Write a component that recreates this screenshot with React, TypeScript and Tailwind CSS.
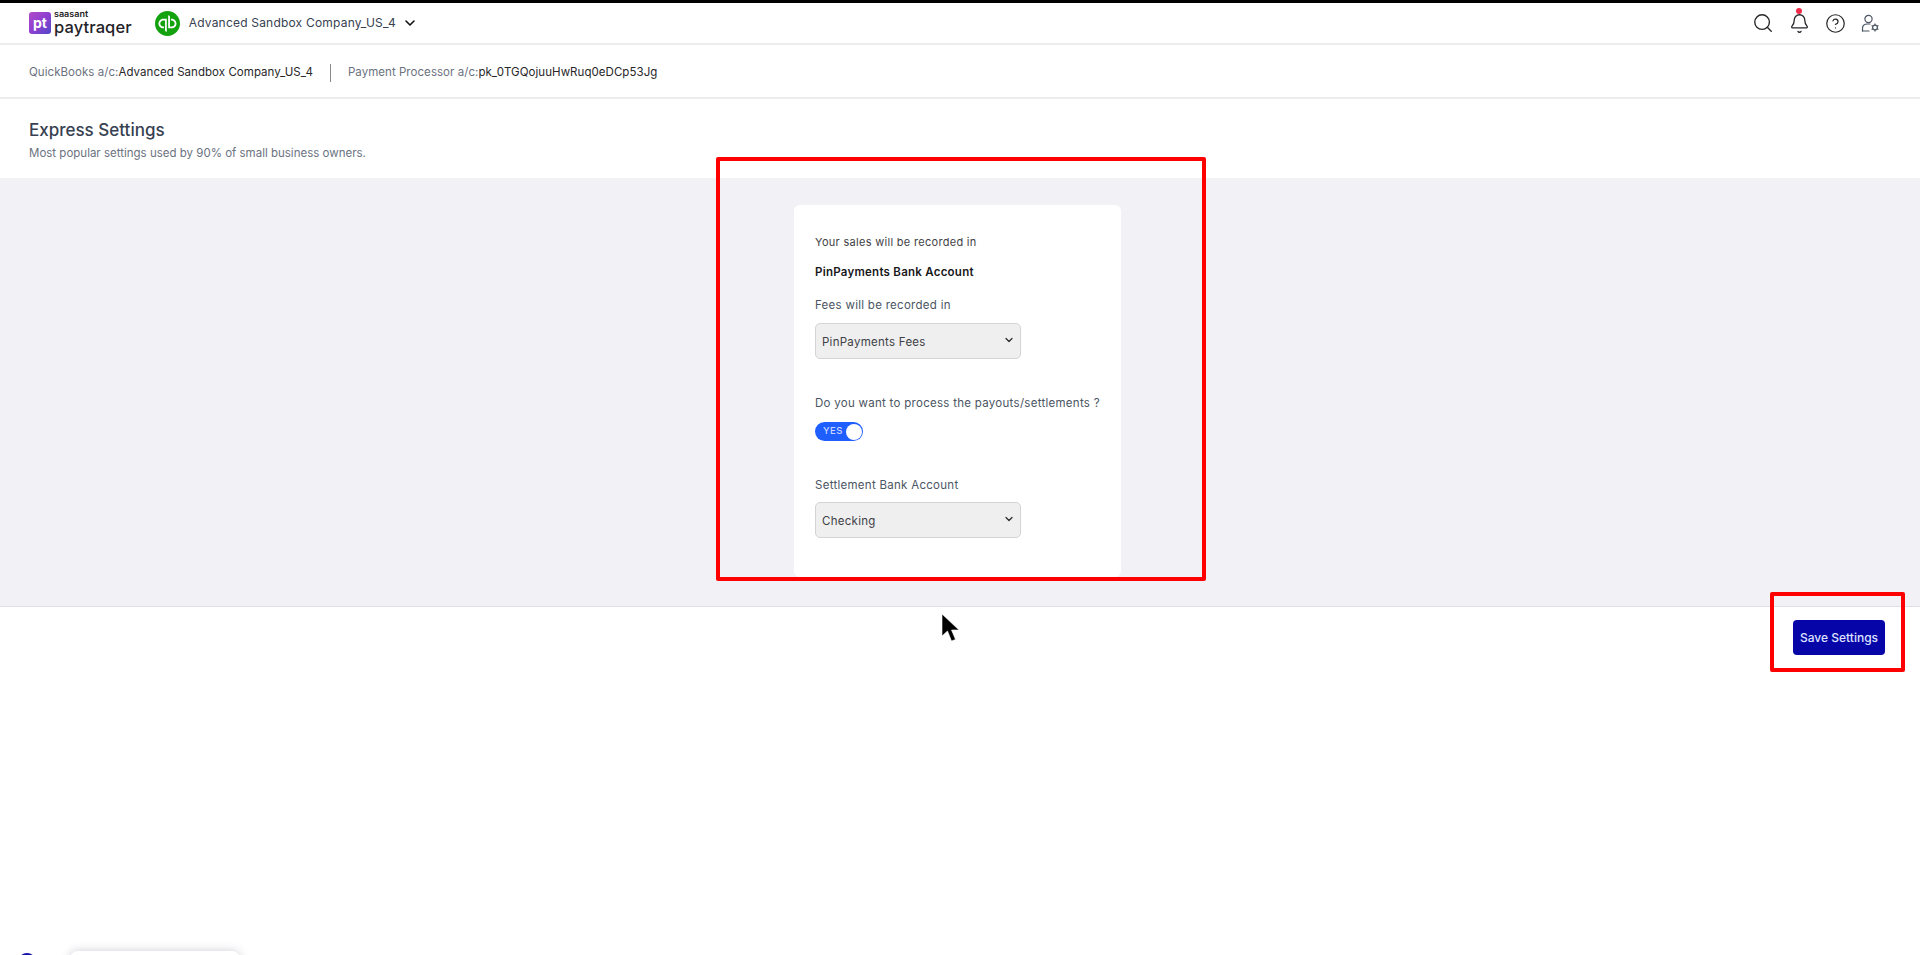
import { ChevronDown, Search, Bell, CircleHelp } from "lucide-react";
import { SiQuickbooks } from "react-icons/si";

const SelectBox = ({ value }: { value: string }) => (
  <div className="relative w-[206px] h-[36px]">
    <select
      defaultValue={value}
      className="w-full h-full appearance-none rounded-[5px] border border-[#d4d4d8] bg-[#efeff0] pl-[6px] pt-[3px] text-[11.5px] tracking-[0.27px] text-[#3f3f46]"
    >
      <option>{value}</option>
    </select>
    <ChevronDown className="absolute right-[6px] top-[11px] h-[12px] w-[12px] text-[#27272a]" strokeWidth={2.4} />
  </div>
);

const Label = ({ children }: { children: string }) => (
  <p className="text-[11.5px] leading-5 tracking-[0.28px] text-[#4b5563]">{children}</p>
);

const UserGear = () => (
  <svg className="h-[19px] w-[19px] text-[#4b5563]" viewBox="0 0 19 19" fill="none" stroke="currentColor" strokeWidth="1.2">
    <circle cx="7.5" cy="5" r="3.6" />
    <path d="M1.5 17 V14.5 C1.5 11.8 3.6 10 6.5 10 H9" strokeLinecap="round" />
    <path d="M1.5 17 H8" strokeLinecap="round" />
    <circle cx="14" cy="13.5" r="2.4" />
    <path d="M14 9.6 V11 M14 16 V17.4 M10.6 11.6 L11.8 12.3 M16.2 14.7 L17.4 15.4 M10.6 15.4 L11.8 14.7 M16.2 12.3 L17.4 11.6" />
  </svg>
);

export default function App() {
  return (
    <div className="relative h-[955px] w-full overflow-hidden bg-white font-['Inter',sans-serif]">
      <div className="h-[3px] bg-black" />

      {/* top nav */}
      <header className="flex h-[42px] items-center border-b-2 border-[#ececee] pl-[29px] pr-[40px]">
        <div className="flex items-center">
          <div className="flex h-[22px] w-[22px] items-center justify-center rounded-[3px] bg-gradient-to-br from-[#b04bc8] via-[#8f3fd0] to-[#4f46c8] text-[14px] font-bold leading-none text-white">
            pt
          </div>
          <div className="ml-[3px] flex flex-col">
            <span className="text-[9px] font-semibold leading-[8px] text-[#222]">saasant</span>
            <span className="text-[16.5px] font-medium leading-[18px] tracking-[0.1px] text-[#1f2328]">paytraqer</span>
          </div>
        </div>
        <SiQuickbooks className="ml-[23px] h-[25px] w-[25px] text-[#13a10e]" />
        <span className="ml-[9px] text-[12px] tracking-[0.2px] text-[#374151]">Advanced Sandbox Company_US_4</span>
        <ChevronDown className="ml-[6px] h-[16px] w-[16px] text-[#111]" strokeWidth={2.4} />
        <div className="ml-auto flex items-center gap-[15px] text-[#27272a]">
          <Search className="h-[22px] w-[22px]" strokeWidth={1.5} />
          <div className="relative">
            <Bell className="h-[21px] w-[21px]" strokeWidth={1.5} />
            <span className="absolute left-[7px] top-[-5px] h-[6px] w-[6px] rounded-full bg-[#ef2b4a]" />
          </div>
          <CircleHelp className="h-[21px] w-[21px]" strokeWidth={1.4} />
          <UserGear />
        </div>
      </header>

      {/* account bar */}
      <div className="flex h-[54px] items-center border-b-2 border-[#ececee] pl-[29px] pt-[3px] text-[11.5px] tracking-[0.05px]">
        <span className="text-[#6b7280]">QuickBooks a/c:</span>
        <span className="text-[#27272a]">Advanced Sandbox Company_US_4</span>
        <span className="mx-[17px] h-[18px] w-[1px] bg-[#8a8a8a]" />
        <span className="text-[#6b7280]">Payment Processor a/c:</span>
        <span className="text-[#27272a]">pk_0TGQojuuHwRuq0eDCp53Jg</span>
      </div>

      {/* title */}
      <div className="h-[79px] pl-[29px] pt-[19px]">
        <h1 className="text-[17px] font-medium leading-[24px] text-[#374151]">Express Settings</h1>
        <p className="mt-[3px] text-[11.5px] leading-4 text-[#6b7280]">Most popular settings used by 90% of small business owners.</p>
      </div>

      {/* settings panel */}
      <section className="flex h-[429px] justify-center border-b border-[#dfdfe4] bg-[#f2f2f6] pt-[27px]">
        <div className="ml-[-5px] h-[372px] w-[327px] rounded-[6px] bg-white pl-[21px] pt-[27px]">
          <p className="text-[11px] leading-5 tracking-[0.3px] text-[#3f3f46]">Your sales will be recorded in</p>
          <p className="mt-[10px] text-[11.5px] font-semibold leading-5 tracking-[0.25px] text-[#18181b]">PinPayments Bank Account</p>
          <div className="mt-[13px]">
            <Label>Fees will be recorded in</Label>
          </div>
          <div className="mt-[8px]">
            <SelectBox value="PinPayments Fees" />
          </div>
          <div className="mt-[34px]">
            <Label>Do you want to process the payouts/settlements ?</Label>
          </div>
          <div className="mt-[9px] flex h-[19px] w-[48px] items-center rounded-full bg-[#1f5eff] pl-[8px] pr-[1px]">
            <span className="text-[9.5px] font-medium tracking-[0.4px] text-[#c9d6ff]">YES</span>
            <span className="ml-auto h-[16px] w-[16px] rounded-full bg-white" />
          </div>
          <div className="mt-[34px]">
            <Label>Settlement Bank Account</Label>
          </div>
          <div className="mt-[7px]">
            <SelectBox value="Checking" />
          </div>
        </div>
      </section>

      {/* footer actions */}
      <div className="flex justify-end pr-[35px] pt-[13px]">
        <button className="h-[35px] w-[92px] rounded-[4px] bg-[#0505a8] text-[12px] font-medium text-[#dfe3ff]">Save Settings</button>
      </div>

      {/* annotation boxes */}
      <div className="absolute left-[716px] top-[157px] h-[424px] w-[490px] rounded-[2px] border-[4px] border-[#ff0000]" />
      <div className="absolute left-[1770px] top-[592px] h-[80px] w-[135px] rounded-[2px] border-[4px] border-[#ff0000]" />

      {/* mouse cursor */}
      <svg className="absolute left-[940px] top-[612px] h-[32px] w-[22px]" viewBox="0 0 22 32">
        <path d="M2 2 L2 24 L7.5 19 L11.5 29 L15.5 27.5 L11.5 18 L19 18 Z" fill="#000" stroke="#fff" strokeWidth="0.6" />
      </svg>

      {/* clipped widgets at the bottom edge */}
      <div className="absolute left-[18px] top-[953px] h-[18px] w-[18px] rounded-full bg-[#1010a8]" />
      <div className="absolute left-[70px] top-[951px] h-[40px] w-[170px] rounded-[8px] bg-white shadow-[0_0_10px_rgba(60,60,90,0.25)]" />
    </div>
  );
}
